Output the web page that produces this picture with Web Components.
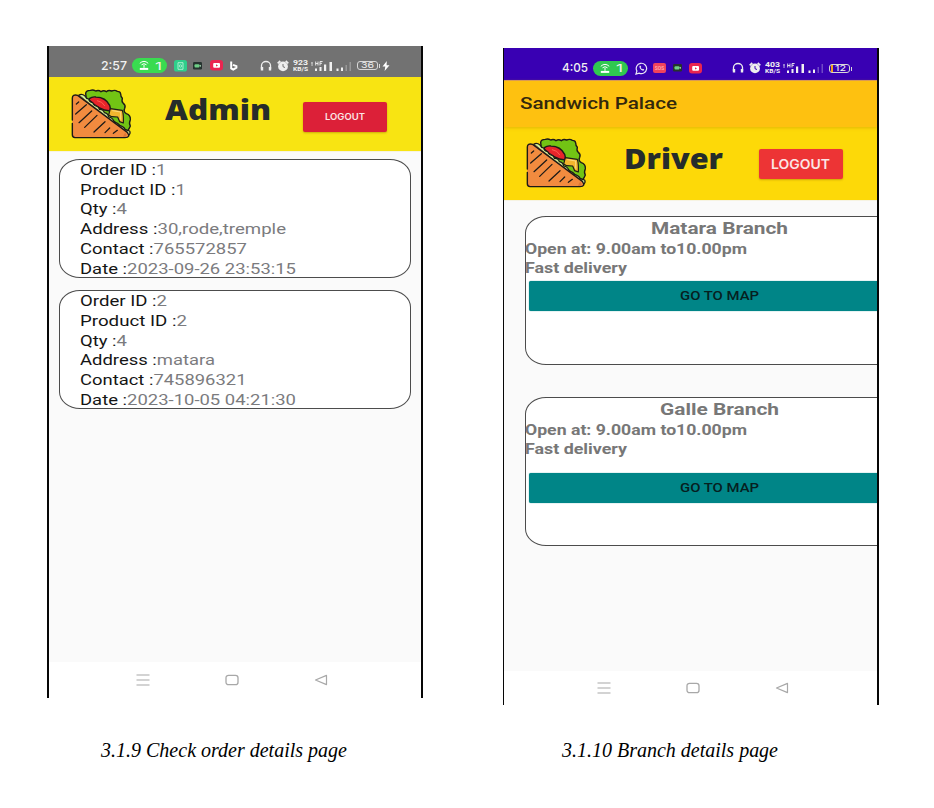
<!DOCTYPE html>
<html lang="en">
<head>
<meta charset="utf-8">
<title>Order and branch pages</title>
<style>
body{margin:0;background:#fff;width:934px;height:808px;overflow:hidden;font-family:Roboto,"Liberation Sans",sans-serif}
main{display:flex;align-items:flex-start;padding-left:47px;gap:80px}
</style>
</head>
<body>
<main>
  <phone-figure style="--top:46px;--cap-top:39.5px;--cap-left:54px">
    <phone-screen style="--h:652px;--bl:2px">
      <status-bar style="--bg:#727272;--h:31px;--start:52px;--drop:8px;--pill:#39db50" time="2:57" apps="one" speed="923" battery="36" charging></status-bar>
      <title-bar label="Admin" width="106" size="28" style="--bg:#f8e412;--h:74px;--icon-left:21px;--icon-top:11px;--name-left:32px;--name-top:12px;--btn-left:32.500px;--btn-top:25px;--btn:#dc2038" logout="40" logout-size="9.5"></title-bar>
      <screen-body style="--pad:7px 10px 0 10px;--gap:12.3px">
        <order-card order="1" product="1" qty="4" address="30,rode,tremple" contact="765572857" date="2023-09-26 23:53:15" widths="86.5,106,47,206,167,216"></order-card>
        <order-card order="2" product="2" qty="4" address="matara" contact="745896321" date="2023-10-05 04:21:30" widths="87,107,47,135,166.5,216"></order-card>
      </screen-body>
      <nav-bar style="--h:36px;--left:87px"></nav-bar>
    </phone-screen>
    <span slot="caption"><fit-text width="246" size="20" line="24" face="serif">3.1.9 Check order details page</fit-text></span>
  </phone-figure>
  <phone-figure style="--top:48px;--cap-top:32.5px;--cap-left:59px">
    <phone-screen style="--h:657px;--bl:1px">
      <status-bar style="--bg:#3900b3;--h:32px;--start:58px;--drop:8px;--pill:#30c850" time="4:05" apps="two" speed="403" battery="12"></status-bar>
      <app-bar><fit-text width="157" size="17" line="24" weight="500">Sandwich Palace</fit-text></app-bar>
      <title-bar label="Driver" width="99" size="29" style="--bg:#fdd908;--h:73px;--icon-left:20.9px;--icon-top:9.7px;--name-left:36.5px;--name-top:11px;--btn-left:36px;--btn-top:22px;--btn:#ed3435" logout="59" logout-size="13"></title-bar>
      <screen-body style="--pad:15px 0 0 21px;--gap:32px">
        <branch-card name="Matara Branch" width="137" style="--title-left:125px;--space:3px"></branch-card>
        <branch-card name="Galle Branch" width="119" style="--title-left:133.5px;--space:14px"></branch-card>
      </screen-body>
      <nav-bar style="--h:34px;--left:93px"></nav-bar>
    </phone-screen>
    <span slot="caption"><fit-text width="216" size="20" line="24" face="serif">3.1.10 Branch details page</fit-text></span>
  </phone-figure>
</main>
<script>
class Base extends HTMLElement {
  constructor() { super(); this.attachShadow({ mode: 'open' }); }
  connectedCallback() { this.shadowRoot.innerHTML = this.render(); this.ready(); }
  a(n) { return this.getAttribute(n); }
  ready() {}
}
const def = (n, render) => customElements.define(n, class extends Base { render() { return render(this); } });

def('phone-figure', () => `<style>:host{display:block;width:376px;padding-top:var(--top)}
  ::slotted(span){display:block;margin:var(--cap-top) 0 0 var(--cap-left);color:#000}</style>
  <slot></slot><slot name="caption"></slot>`);

def('phone-screen', () => `<style>:host{display:flex;flex-direction:column;box-sizing:border-box;width:376px;height:var(--h);overflow:hidden;
  border:solid #060606;border-width:0 2px 0 var(--bl);background:#fafafa}</style><slot></slot>`);

const headset = `<svg width="12" height="12" viewBox="0 0 12 12" fill="none" stroke="#eee" stroke-width="1.3"><path d="M1.5 9V5.5a4.5 4 0 0 1 9 0V9"/><path d="M2 7v3.4M10 7v3.4" stroke-width="2.4"/></svg>`;
const alarm = `<svg width="12" height="12" viewBox="0 0 12 12"><circle cx="6" cy="6.4" r="4.9" fill="#eee"/><path d="M.7 3.300l2.600-2.300M11.300 3.300L8.700 1" stroke="#eee" stroke-width="1.8"/><path d="M6 4v2.700l2 .8" fill="none" stroke="var(--bg)"/></svg>`;
const video = `<svg width="13" height="11" viewBox="0 0 13 11"><rect width="13" height="10.500" rx="3" fill="#ea2550"/><rect x="3.200" y="3" width="6.800" height="4.800" rx="1" fill="#fff"/><path d="M6 4.300l2 1.100-2 1.100z" fill="#ea2550"/></svg>`;
const camera = `<svg width="9" height="8" viewBox="0 0 9 8"><rect width="9" height="7.500" rx="1.300" fill="#26332f"/><rect x="1.500" y="2.200" width="5" height="3.200" rx="1" fill="#6fcf86"/><path d="M6.300 3.800l1.500-1v2.200z" fill="#b8e8c4"/></svg>`;
const apps = {
  one: `<svg style="margin-left:7px" width="13" height="12" viewBox="0 0 13 12"><rect width="13" height="11.500" rx="2.600" fill="#2ecf8b"/><path d="M4 2.700h5v6.600H4z" fill="none" stroke="#c9f6df" stroke-width=".8"/><circle cx="6.500" cy="6" r="1.200" fill="none" stroke="#c9f6df" stroke-width=".7"/></svg>
    <i style="margin-left:6px">${camera}</i><i style="margin-left:8px">${video}</i>
    <svg style="margin-left:6px" width="9" height="12" viewBox="0 0 9 12" fill="none" stroke="#fff" stroke-width="2"><path d="M2.200 1.500v7l2 1 3.200-1.800V6.200L4 4.800"/></svg>
    <i style="margin-left:22px">${headset}</i>`,
  two: `<svg style="margin-left:7px" width="13" height="13" viewBox="0 0 13 13" fill="none" stroke="#e8e5f4" stroke-width="1.200"><path d="M1 12l.9-3a5.200 5.200 0 1 1 2.200 2.100z"/><path d="M4.700 3.800c-.9 1.200.7 4.800 3.700 4.900l.9-1.100-1.500-.9-.7.600-1.400-1.500.5-.7-.5-1.300z" fill="#e8e5f4" stroke="none"/></svg>
    <b class="sos">SOS</b><i style="margin-left:7px">${camera}</i><i style="margin-left:7px">${video}</i><i style="margin-left:29.500px">${headset}</i>`
};
def('status-bar', e => {
  const c = e.hasAttribute('charging'), b = e.a('battery');
  return `<style>:host{display:flex;flex:none;align-items:center;box-sizing:border-box;height:var(--h);background:var(--bg);padding:var(--drop) 0 0 var(--start);color:#f1f1f1}
  i{display:flex}svg{display:block;flex:none}
  .pill{display:flex;align-items:center;box-sizing:border-box;width:35px;height:15px;border-radius:8px;background:var(--pill);margin-left:5px;padding-left:7px}
  .one{margin-left:6px}
  .sos{box-sizing:border-box;width:13px;height:10px;border-radius:2px;background:#f0435c;color:#ffb0b4;font:500 5px/10px Roboto,sans-serif;text-align:center;margin-left:5px}
  .speed{margin-left:4px}
  .bat{position:relative;box-sizing:border-box;width:21px;height:9px;border:1px solid #d8d8d8;border-radius:3px;display:flex;justify-content:center;margin-left:5px}
  .bat::after{content:"";width:1px;height:4px;background:#d8d8d8;position:absolute;right:-3px;top:2px}
  .low{position:absolute;left:1px;top:0;width:2px;height:7px;background:#f3a21c}
  .low + fit-text{margin-left:3px}
  </style>
  <fit-text width="26" size="12" line="14" face="Inter" weight="500">${e.a('time')}</fit-text>
  <div class="pill"><svg width="10" height="11" viewBox="0 0 10 11" fill="none" stroke="#fff"><path d="M.8 3.300Q5-.6 9.200 3.300M2.500 4.800q2.500-2.200 5 0"/><path d="M5 4.800v3" /><path d="M.8 8.900h8.400" stroke-width="2"/></svg>
  <fit-text class="one" width="7" size="11" line="14" face="Inter">1</fit-text></div>
  ${apps[e.a('apps')]}<i style="margin-left:5px">${alarm}</i>
  <div class="speed"><fit-text width="15" size="7" line="7" face="Roboto" weight="700">${e.a('speed')}</fit-text><fit-text width="15" size="5" line="5" face="Roboto" weight="700">KB/S</fit-text></div>
  <svg style="margin-left:2px" width="42" height="12" viewBox="0 0 42 12" fill="#f1f1f1"><path d="M1 2.500h2v1H1zM1.300 4.500h1.500v1H1.300zM5 8.500h2V11H5zM9.500 7h2v4h-2zM14 4.500h2.200V11H14zM19.500 2H22v9h-2.500zM26.500 8.500h2V11h-2zM31 7.500h2V11h-2z"/><path d="M5.700 1.500v4M8 1.500v4M5.700 3.500H8M10 5.500v-4h2.600M10 3.300h2" fill="none" stroke="#f1f1f1" stroke-width=".9"/><path d="M35.500 5h1.500v6h-1.500zM39.500 2H41v9h-1.500z" opacity=".3"/></svg>
  <div class="bat">${c ? '' : '<span class="low"></span>'}<fit-text width="${c ? 13 : 11}" size="8" line="7" face="Inter">${b}</fit-text></div>
  ${c ? '<svg style="margin-left:4px" width="8" height="10" viewBox="0 0 8 10"><path d="M4.800 0L.5 5.400h2.800L2.600 10 7.500 4.200H4.600z" fill="#fff"/></svg>' : ''}`;
});

def('app-bar', () => `<style>:host{display:block;flex:none;box-sizing:border-box;height:47px;padding:10px 0 0 16px;background:#fec110;border-top:1px solid #d99a55;box-shadow:0 1px 3px #b8860066;color:#33280c;z-index:1}</style><slot></slot>`);

def('sandwich-icon', () => `<style>:host{display:block;width:62.700px;height:52px}svg{display:block}</style>
<svg width="62.700" height="52" viewBox="90 144 188 156" stroke="#1d1a17" stroke-width="4.200" stroke-linejoin="round" stroke-linecap="round">
<path d="M137 161q0-10 14-10 8-3 16 2 9-4 16 2 8-5 16 0 7-6 16-2 10-4 17 1 9 0 10 8 0 8 5 13-3 10 3 15 8 6 4 15-5 10 5 16 13 4 12 18-5 11 0 19-4 9-8 15l-58-40-66-55z" fill="#72c414"/>
<path d="M148 176q9-7 20-5 29 1 41 25 3 8 1 16-28 2-62-31z" fill="#e8252b"/>
<path d="M172 182q15 2 22 15" fill="none" stroke="#ff6a55" stroke-width="2.500"/>
<path d="M206 225l5-19 36 5q4 12 3 38l-11-4-6-14-18-1z" fill="#f3b62e" stroke-width="3.500"/>
<path d="M218 212l24 4v22" fill="none" stroke="#ffe08b" stroke-width="2.500"/>
<path d="M116 166q9-6 19 2 3 8 11 9 2 9 12 11 3 9 13 11 5 1 7 9 12-1 15 10 11 2 13 13 12 2 15 12 5 6 12 7 4 8 13 9 8 3 9 10 8 2 14 4 4 7-4 14z" fill="#cff09a" stroke-width="3.600"/>
<path d="M104 166q8-5 17 3L262 277q11 16-7 16H105q-8-1-8-9v-35M97 240v-66q0-6 7-8z" fill="#f28b3f" stroke="none"/>
<path d="M97 240v-66q0-12 16-8L262 277q11 16-7 16H105q-8-1-8-9v-34" fill="#f28b3f"/>
<path d="M256 278q5 6 2 12l-9 1 3-8z" fill="#dc7636" stroke="none"/>
<path d="M109 192l7-6M107 222l32-28M117 248l38-35M134 262l37-36M162 276l33-31M195 278l14-14M220 280l12-9" fill="none" stroke-width="3.800"/>
</svg>`);

def('title-bar', e => `<style>:host{display:flex;flex:none;align-items:flex-start;height:var(--h);background:var(--bg);color:#252c2b}
  sandwich-icon{margin:var(--icon-top) 0 0 var(--icon-left)}
  .name{margin:var(--name-top) 0 0 var(--name-left)}
  button{all:unset;box-sizing:border-box;display:flex;align-items:center;justify-content:center;width:83.500px;height:29.500px;margin:var(--btn-top) 0 0 var(--btn-left);background:var(--btn);border-radius:2px;color:#fbe5e5;box-shadow:0 1px 2px #8a5a0066}</style>
  <sandwich-icon></sandwich-icon><fit-text class="name" width="${e.a('width')}" size="${e.a('size')}" line="40" face="Open Sans" weight="800">${e.a('label')}</fit-text>
  <button><fit-text width="${e.a('logout')}" size="${e.a('logout-size')}" line="16" face="Inter" weight="600">LOGOUT</fit-text></button>`);

def('screen-body', () => `<style>:host{display:flex;flex:1;min-height:0;flex-direction:column;gap:var(--gap);padding:var(--pad);background:#fafafa;border-top:1px solid #f6f3e2}</style><slot></slot>`);

def('order-card', e => {
  const w = e.a('widths').split(',');
  const rows = [['Order ID', 'order'], ['Product ID', 'product'], ['Qty', 'qty'], ['Address', 'address'], ['Contact', 'contact'], ['Date', 'date']];
  return `<style>:host{display:block;flex:none;box-sizing:border-box;width:352px;height:119px;border:1px solid #4c4c4c;border-radius:21px/17px;background:#fff;padding:.8px 0 0 19.500px;color:#151515}
  em{font-style:normal;color:#7b7b7e}</style>` +
  rows.map(([l, k], i) => `<fit-text width="${w[i]}" size="15.5" line="19.8">${l} :<em>${e.a(k)}</em></fit-text>`).join('');
});

def('branch-card', e => `<style>:host{display:block;flex:none;box-sizing:border-box;width:380px;height:149px;border:1px solid #4c4c4c;border-radius:21px/17px;background:#fff;color:#777}
  .title{margin:1px 0 0 var(--title-left)}
  .line{margin-left:-1px}
  .open{margin-top:1px}
  button{all:unset;display:flex;align-items:center;box-sizing:border-box;width:360px;height:30px;padding-left:151px;margin:var(--space) 0 0 3px;border-radius:2px;background:#008587;color:#06201f;box-shadow:0 0 1px #008587}</style>
  <fit-text class="title" width="${e.a('width')}" size="16.5" line="21" weight="700">${e.a('name')}</fit-text>
  <fit-text class="line open" width="222" size="14.500" line="19" weight="700">Open at: 9.00am to10.00pm</fit-text>
  <fit-text class="line" width="102" size="14.500" line="19" weight="700">Fast delivery</fit-text>
  <button><fit-text width="79" size="12.500" line="16" weight="500">GO TO MAP</fit-text></button>`);

def('nav-bar', () => `<style>:host{display:flex;flex:none;align-items:center;box-sizing:border-box;height:var(--h);background:#fff;padding-left:var(--left);gap:75px}svg{flex:none}</style>
  <svg width="14" height="12" viewBox="0 0 14 12" stroke="#a8a8a8" stroke-width="1.200"><path d="M.5 1h13M.5 6h13M.5 11h13"/></svg>
  <svg width="14" height="12" viewBox="0 0 14 12" fill="none" stroke="#a8a8a8" stroke-width="1.300"><rect x="1" y="1.300" width="12" height="9.400" rx="2.500"/></svg>
  <svg width="14" height="12" viewBox="0 0 14 12" fill="none" stroke="#a8a8a8" stroke-width="1.200" stroke-linejoin="round"><path d="M12.500 1.400v9.200L1.500 6z"/></svg>`);

/* One line of text, scaled horizontally to a given width. */
customElements.define('fit-text', class extends Base {
  render() {
    const face = this.a('face'), serif = face === 'serif';
    return `<style>:host{display:block;flex:none;width:${this.a('width')}px;height:${this.a('line')}px}
    span{display:inline-block;white-space:nowrap;vertical-align:top;transform-origin:0 0;
    font:${serif ? 'italic' : 'normal'} ${this.a('weight') || 400} ${this.a('size')}px/${this.a('line')}px ${serif ? '"Liberation Serif",serif' : `"${face || 'Roboto'}",sans-serif`}}</style><span><slot></slot></span>`;
  }
  ready() {
    const s = this.shadowRoot.querySelector('span');
    s.style.transform = `scaleX(${this.a('width') / s.getBoundingClientRect().width})`;
  }
});
</script>
</body>
</html>
